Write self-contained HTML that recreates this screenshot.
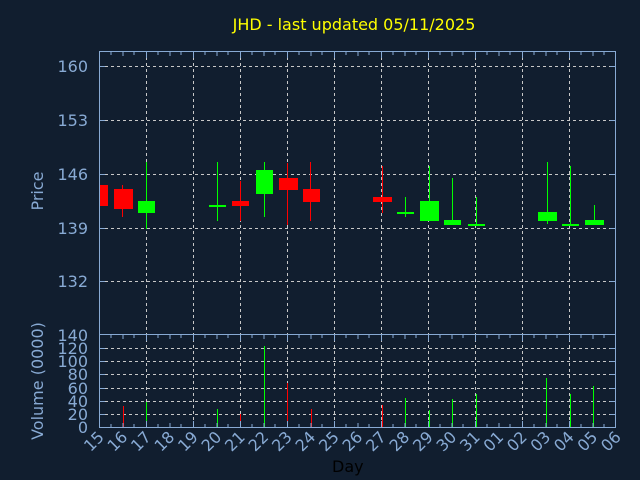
<!DOCTYPE html>
<html><head><meta charset="utf-8"><style>
html,body{margin:0;padding:0;background:#111e2f;}
svg{display:block;font-family:"DejaVu Sans","Liberation Sans",sans-serif;}
</style></head><body>
<svg width="640" height="480" viewBox="0 0 640 480" xmlns="http://www.w3.org/2000/svg">
<rect width="640" height="480" fill="#111e2f"/>
<text x="354" y="30" fill="#ffff00" font-size="16" text-anchor="middle">JHD - last updated 05/11/2025</text>
<g stroke="#c8c8c8" stroke-width="1" stroke-dasharray="3,3" fill="none">
<path d="M146.5 51V427M193.5 51V427M240.5 51V427M287.5 51V427M334.5 51V427M381.5 51V427M428.5 51V427M475.5 51V427M522.5 51V427M569.5 51V427"/>
<path d="M99 66.5H616M99 120.5H616M99 174.5H616M99 228.5H616M99 281.5H616"/>
<path d="M99 348.5H616M99 361.5H616M99 374.5H616M99 388.5H616M99 401.5H616M99 414.5H616"/>
</g>
<g fill="#ff0000">
<rect x="99" y="185" width="9" height="21"/>
<rect x="122" y="185" width="1" height="32"/><rect x="114" y="189" width="19" height="20"/>
<rect x="240" y="181" width="1" height="40"/><rect x="232" y="201" width="17" height="5"/>
<rect x="287" y="163" width="1" height="62"/><rect x="279" y="178" width="19" height="12"/>
<rect x="310" y="162" width="1" height="59"/><rect x="303" y="189" width="17" height="13"/>
<rect x="382" y="166" width="1" height="47"/><rect x="373" y="197" width="19" height="5"/>
</g>
<g fill="#00ff00">
<rect x="146" y="162" width="1" height="67"/><rect x="138" y="201" width="17" height="12"/>
<rect x="217" y="162" width="1" height="59"/><rect x="209" y="205" width="17" height="2"/>
<rect x="264" y="162" width="1" height="55"/><rect x="256" y="170" width="17" height="24"/>
<rect x="405" y="197" width="1" height="20"/><rect x="397" y="212" width="17" height="2"/>
<rect x="429" y="166" width="1" height="55"/><rect x="420" y="201" width="19" height="20"/>
<rect x="452" y="178" width="1" height="47"/><rect x="444" y="220" width="17" height="5"/>
<rect x="476" y="197" width="1" height="29"/><rect x="468" y="224" width="17" height="2"/>
<rect x="547" y="162" width="1" height="62"/><rect x="538" y="212" width="19" height="9"/>
<rect x="570" y="166" width="1" height="60"/><rect x="562" y="224" width="17" height="2"/>
<rect x="594" y="205" width="1" height="20"/><rect x="585" y="220" width="19" height="5"/>
</g>
<g fill="#ff0000">
<rect x="123" y="406" width="1" height="21"/>
<rect x="240" y="414" width="1" height="13"/>
<rect x="287" y="383" width="1" height="44"/>
<rect x="311" y="409" width="1" height="18"/>
<rect x="382" y="405" width="1" height="22"/>
</g>
<g fill="#00ff00">
<rect x="146" y="402" width="1" height="25"/>
<rect x="217" y="409" width="1" height="18"/>
<rect x="264" y="346" width="1" height="81"/>
<rect x="405" y="398" width="1" height="29"/>
<rect x="429" y="410" width="1" height="17"/>
<rect x="452" y="399" width="1" height="28"/>
<rect x="476" y="394" width="1" height="33"/>
<rect x="546" y="378" width="1" height="49"/>
<rect x="570" y="394" width="1" height="33"/>
<rect x="593" y="386" width="1" height="41"/>
</g>
<g stroke="#88aad4" stroke-width="1" fill="none">
<rect x="99.5" y="51.5" width="516" height="376"/>
<path d="M99 334.5H616"/>
<path d="M111 52v3M123 52v4M134 52v3M146.5 52v6M158 52v3M170 52v4M181 52v3M193.5 52v6M205 52v3M217 52v4M228 52v3M240.5 52v6M252 52v3M264 52v4M275 52v3M287.5 52v6M299 52v3M311 52v4M322 52v3M334.5 52v6M346 52v3M358 52v4M369 52v3M381.5 52v6M393 52v3M405 52v4M416 52v3M428.5 52v6M440 52v3M452 52v4M463 52v3M475.5 52v6M487 52v3M499 52v4M510 52v3M522.5 52v6M534 52v3M546 52v4M557 52v3M569.5 52v6M581 52v3M593 52v4M604 52v3"/>
<path d="M111 335v3M123 335v4M134 335v3M146.5 335v6M158 335v3M170 335v4M181 335v3M193.5 335v6M205 335v3M217 335v4M228 335v3M240.5 335v6M252 335v3M264 335v4M275 335v3M287.5 335v6M299 335v3M311 335v4M322 335v3M334.5 335v6M346 335v3M358 335v4M369 335v3M381.5 335v6M393 335v3M405 335v4M416 335v3M428.5 335v6M440 335v3M452 335v4M463 335v3M475.5 335v6M487 335v3M499 335v4M510 335v3M522.5 335v6M534 335v3M546 335v4M557 335v3M569.5 335v6M581 335v3M593 335v4M604 335v3"/>
<path d="M111 427v-3M123 427v-4M134 427v-3M146.5 427v-6M158 427v-3M170 427v-4M181 427v-3M193.5 427v-6M205 427v-3M217 427v-4M228 427v-3M240.5 427v-6M252 427v-3M264 427v-4M275 427v-3M287.5 427v-6M299 427v-3M311 427v-4M322 427v-3M334.5 427v-6M346 427v-3M358 427v-4M369 427v-3M381.5 427v-6M393 427v-3M405 427v-4M416 427v-3M428.5 427v-6M440 427v-3M452 427v-4M463 427v-3M475.5 427v-6M487 427v-3M499 427v-4M510 427v-3M522.5 427v-6M534 427v-3M546 427v-4M557 427v-3M569.5 427v-6M581 427v-3M593 427v-4M604 427v-3"/>
<path d="M100 66.5h5M100 120.5h5M100 174.5h5M100 228.5h5M100 281.5h5M615 66.5h-5M615 120.5h-5M615 174.5h-5M615 228.5h-5M615 281.5h-5"/>
<path d="M100 348.5h5M100 361.5h5M100 374.5h5M100 388.5h5M100 401.5h5M100 414.5h5M615 348.5h-5M615 361.5h-5M615 374.5h-5M615 388.5h-5M615 401.5h-5M615 414.5h-5"/>
</g>
<g fill="#88aad4" font-size="16" text-anchor="end">
<text x="88" y="72">160</text>
<text x="88" y="126">153</text>
<text x="88" y="180">146</text>
<text x="88" y="234">139</text>
<text x="88" y="287">132</text>
<text x="88" y="341">140</text>
<text x="88" y="354">120</text>
<text x="88" y="367">100</text>
<text x="88" y="380">80</text>
<text x="88" y="394">60</text>
<text x="88" y="407">40</text>
<text x="88" y="420">20</text>
<text x="88" y="433">0</text>
</g>
<text transform="translate(43,191) rotate(-90)" fill="#88aad4" font-size="16" text-anchor="middle">Price</text>
<text transform="translate(43,381) rotate(-90)" fill="#88aad4" font-size="16" text-anchor="middle">Volume (0000)</text>
<g fill="#88aad4" font-size="16" text-anchor="end">
<text transform="translate(105,438) rotate(-45)">15</text>
<text transform="translate(128.5,438) rotate(-45)">16</text>
<text transform="translate(152,438) rotate(-45)">17</text>
<text transform="translate(175.5,438) rotate(-45)">18</text>
<text transform="translate(199,438) rotate(-45)">19</text>
<text transform="translate(222.5,438) rotate(-45)">20</text>
<text transform="translate(246,438) rotate(-45)">21</text>
<text transform="translate(269.5,438) rotate(-45)">22</text>
<text transform="translate(293,438) rotate(-45)">23</text>
<text transform="translate(316.5,438) rotate(-45)">24</text>
<text transform="translate(340,438) rotate(-45)">25</text>
<text transform="translate(363.5,438) rotate(-45)">26</text>
<text transform="translate(387,438) rotate(-45)">27</text>
<text transform="translate(410.5,438) rotate(-45)">28</text>
<text transform="translate(434,438) rotate(-45)">29</text>
<text transform="translate(457.5,438) rotate(-45)">30</text>
<text transform="translate(481,438) rotate(-45)">31</text>
<text transform="translate(504.5,438) rotate(-45)">01</text>
<text transform="translate(528,438) rotate(-45)">02</text>
<text transform="translate(551.5,438) rotate(-45)">03</text>
<text transform="translate(575,438) rotate(-45)">04</text>
<text transform="translate(598.5,438) rotate(-45)">05</text>
<text transform="translate(622,438) rotate(-45)">06</text>
</g>
<text x="332" y="472" fill="#000000" font-size="16">Day</text>
</svg>
</body></html>
